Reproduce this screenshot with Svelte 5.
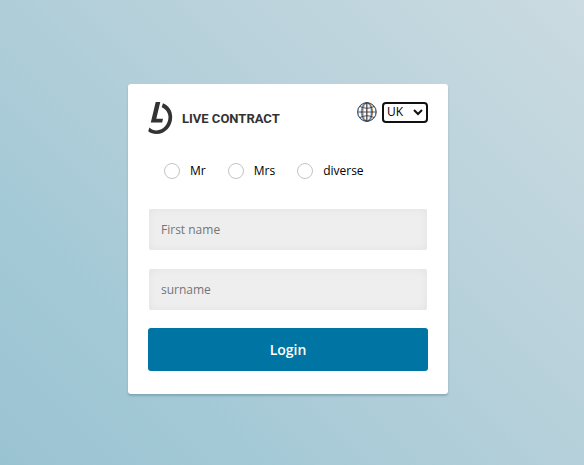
<script>
  const salutations = ['Mr', 'Mrs', 'diverse'];
  let salutation = $state('');
  let language = $state('UK');
  let firstName = $state('');
  let surname = $state('');
</script>

<main>
  <form class="card" onsubmit={(event) => event.preventDefault()}>
    <header>
      <div class="brand">
        <svg class="mark" viewBox="0 0 26 34" aria-hidden="true">
          <path d="M7.7 1H12.3L8.3 17.7H15L14.2 21.4H2.8Z" />
          <path d="M15 2.3C20.8 4.6 24.2 9.8 24.2 16C24.2 25.4 17.5 33 8.3 33C5.3 33 2.4 32 .2 30.2L1.4 26.4C3.3 28.3 5.8 29.4 8.5 29.4C15.4 29.4 20.5 23.2 20.5 16.1C20.5 11.9 17.9 8.3 13.7 6.3Z" />
        </svg>
        <span>LIVE CONTRACT</span>
      </div>
      <div class="language">
        <svg class="globe" viewBox="0 0 20 20" aria-hidden="true">
          <g class="cool">
            <circle cx="9.7" cy="10" r="9.2" />
            <ellipse cx="9.2" cy="10" rx="5" ry="9.2" />
          </g>
          <g class="warm">
            <ellipse cx="10.8" cy="10" rx="4.8" ry="9.2" />
            <path d="M10.6 1V19" />
          </g>
          <circle cx="10" cy="10" r="9.3" />
          <ellipse cx="10" cy="10" rx="5" ry="9.3" />
          <path d="M9.6 1V19M1 10H19M3 4.5Q10 8 17 4.5M3 15.5Q10 12 17 15.5" />
        </svg>
        <div class="picker">
          <select aria-label="Language" bind:value={language}>
            <option>UK</option>
            <option>DE</option>
          </select>
          <svg viewBox="0 0 10 7" aria-hidden="true"><path d="M1 1L5 5L9 1" /></svg>
        </div>
      </div>
    </header>

    <div class="salutations" role="radiogroup" aria-label="Salutation">
      {#each salutations as option}
        <label>
          <input type="radio" name="salutation" value={option} bind:group={salutation} />
          {option}
        </label>
      {/each}
    </div>

    <div class="fields">
      <input type="text" aria-label="First name" placeholder="First name" bind:value={firstName} />
      <input type="text" aria-label="surname" placeholder="surname" bind:value={surname} />
    </div>

    <button type="submit">Login</button>
  </form>
</main>

<style>
  :global(body) {
    margin: 0;
  }

  main {
    box-sizing: border-box;
    min-height: 100vh;
    padding: 84px 24px 64px 16px;
    background: linear-gradient(45deg, #9ac3d2 0%, #a4c9d6 25%, #b5d0da 55%, #cbdbe1 100%);
    font-family: "Open Sans", sans-serif;
    font-size: 12px;
    color: #000;
  }

  .card {
    box-sizing: border-box;
    max-width: 320px;
    margin: 0 auto;
    padding: 17px 20px 23px;
    border-radius: 3px;
    background: #fff;
    box-shadow: 0 2px 2px rgba(30, 70, 90, 0.25);
  }

  header {
    display: flex;
    justify-content: space-between;
    align-items: flex-start;
  }

  .brand {
    display: flex;
    align-items: flex-start;
    gap: 8px;
    font-family: Roboto, sans-serif;
    font-size: 13px;
    font-weight: 700;
    line-height: 36px;
    color: #333;
  }

  .mark {
    width: 26px;
    height: 34px;
    fill: #333;
  }

  .language {
    display: flex;
    align-items: flex-start;
    gap: 5px;
    padding-top: 1px;
  }

  .globe {
    width: 20px;
    height: 20px;
    fill: none;
    stroke: #262c3c;
    stroke-width: 0.8;
  }

  .cool {
    stroke: #6fb0e4;
    stroke-width: 1;
  }

  .warm {
    stroke: #f09a45;
    stroke-width: 1;
  }

  .picker {
    position: relative;
  }

  select {
    display: block;
    appearance: none;
    width: 46px;
    height: 21px;
    padding: 0 16px 2px 3px;
    border: 2px solid #101010;
    border-radius: 4px;
    background: #fff;
    color: #000;
    font: 12px/14px "Open Sans", sans-serif;
    outline: none;
  }

  .picker svg {
    position: absolute;
    top: 7px;
    right: 5px;
    width: 10px;
    height: 7px;
    fill: none;
    stroke: #101010;
    stroke-width: 2;
    pointer-events: none;
  }

  .salutations {
    display: flex;
    gap: 22px;
    margin: 24px 16px 0;
  }

  label {
    display: flex;
    align-items: center;
    gap: 10px;
    line-height: 20px;
  }

  input[type="radio"] {
    appearance: none;
    width: 16px;
    height: 16px;
    margin: 0;
    border: 1px solid #c4c4c4;
    border-radius: 50%;
    background: #fff;
  }

  input[type="radio"]:checked {
    background: radial-gradient(#0074a2 0 4px, #fff 5px);
  }

  .fields {
    display: grid;
    gap: 19px;
    margin: 28px 1px 18px;
  }

  input[type="text"] {
    box-sizing: border-box;
    width: 100%;
    height: 41px;
    padding: 0 12px;
    border: 0;
    border-radius: 2px;
    background: #eee;
    box-shadow: inset 0 0 8px rgba(0, 0, 0, 0.05);
    color: #333;
    font: 12px/16px "Open Sans", sans-serif;
  }

  input::placeholder {
    color: #757575;
    opacity: 1;
  }

  button {
    display: block;
    width: 100%;
    height: 43px;
    padding: 0;
    border: 0;
    border-radius: 3px;
    background: #0074a2;
    color: #fff;
    font: 600 14px/20px "Open Sans", sans-serif;
    cursor: pointer;
  }
</style>
